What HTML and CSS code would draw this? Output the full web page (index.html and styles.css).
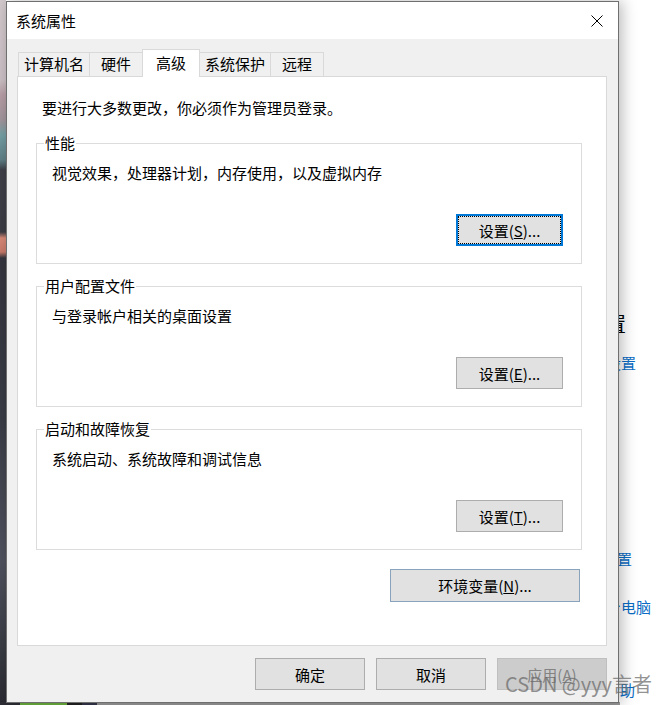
FILE: index.html
```html
<!DOCTYPE html>
<html lang="zh-CN">
<head>
    <meta charset="UTF-8">
    <title>系统属性</title>
    <link rel="stylesheet" href="styles.css">
</head>
<body>
    <div class="desktop">
        <div class="screen">
            <div class="wallpaper"></div>
            <!-- Einstellungen-Fenster im Hintergrund -->
            <div class="settings-window">
                <div class="related">
                    <div class="related-title">相关设置</div>
                    <a class="related-link first">远程桌面设置</a>
                    <a class="related-link second">高级系统设置</a>
                    <a class="related-link third">重命名这台电脑</a>
                    <a class="related-link help">获取帮助</a>
                </div>
            </div>
        </div>
        <div class="taskbar"></div>

        <!-- Dialog -->
        <div class="dialog">
            <div class="titlebar">
                <span class="title">系统属性</span>
                <span class="close">
                    <svg width="12" height="12" viewBox="0 0 12 12">
                        <path d="M0.5 0.5 L11.5 11.5 M11.5 0.5 L0.5 11.5" stroke="#000" stroke-width="1" fill="none"/>
                    </svg>
                </span>
            </div>
            <div class="dialog-body">
                <div class="tabs">
                    <div class="tab">计算机名</div>
                    <div class="tab">硬件</div>
                    <div class="tab active">高级</div>
                    <div class="tab">系统保护</div>
                    <div class="tab">远程</div>
                </div>
                <div class="panel">
                    <p class="notice">要进行大多数更改，你必须作为管理员登录。</p>

                    <div class="group">
                        <div class="group-title">性能</div>
                        <p class="group-text">视觉效果，处理器计划，内存使用，以及虚拟内存</p>
                        <div class="group-actions">
                            <button class="btn focused">设置(<u>S</u>)...</button>
                        </div>
                    </div>

                    <div class="group">
                        <div class="group-title">用户配置文件</div>
                        <p class="group-text">与登录帐户相关的桌面设置</p>
                        <div class="group-actions">
                            <button class="btn">设置(<u>E</u>)...</button>
                        </div>
                    </div>

                    <div class="group">
                        <div class="group-title">启动和故障恢复</div>
                        <p class="group-text">系统启动、系统故障和调试信息</p>
                        <div class="group-actions">
                            <button class="btn">设置(<u>T</u>)...</button>
                        </div>
                    </div>

                    <div class="env-row">
                        <button class="btn env">环境变量(<u>N</u>)...</button>
                    </div>
                </div>
                <div class="dialog-buttons">
                    <button class="btn wide">确定</button>
                    <button class="btn wide">取消</button>
                    <button class="btn wide" disabled>应用(<u>A</u>)</button>
                </div>
            </div>
        </div>

        <div class="watermark">CSDN @yyy言者</div>
    </div>
</body>
</html>
```

FILE: styles.css
```css
body {
    margin: 0;
    font-family: "Noto Sans CJK SC", "Microsoft YaHei", sans-serif;
    font-size: 15px;
    color: #000;
    background-color: #fff;
}
.desktop {
    position: relative;
    width: 663px;
    height: 705px;
    overflow: hidden;
}
.screen {
    display: flex;
    height: 702px;
}
.wallpaper {
    width: 6px;
    flex-shrink: 0;
    background: linear-gradient(to bottom,
        #d3cace 0, #cbc0c5 80px, #b89ea6 95px, #a2959c 120px,
        #74a0a5 135px, #5f7f86 160px, #3e3f48 170px, #3b3c45 232px,
        #d98a78 238px, #c87a6a 252px, #34353e 258px, #3a3c46 420px,
        #50535e 560px, #3c3e47 640px, #2b2c33 702px);
}
.settings-window {
    flex: 1;
    background-color: #fff;
    padding-left: 540px;
}
.related {
    display: flex;
    flex-direction: column;
    align-items: flex-start;
    white-space: nowrap;
}
.related-title {
    margin-top: 310px;
    font-size: 20px;
    line-height: 28px;
}
.related-link {
    color: #0a6cc4;
    line-height: 22px;
}
.related-link.first { margin-top: 14px; }
.related-link.second { margin-top: 174px; margin-left: -4px; }
.related-link.third { margin-top: 26px; }
.related-link.help { margin-top: 61px; padding-left: 29px; }
.taskbar {
    height: 3px;
    background: linear-gradient(to right,
        #2e2f36 0, #2e2f36 20px, #6cb33f 20px, #6cb33f 67px,
        #222 67px, #222 82px, #34354a 82px, #34354a 97px, #9a9a9a 97px, #9a9a9a 620px, #fff 620px);
}

/* Dialog */
.dialog {
    position: absolute;
    left: 6px;
    top: 1px;
    width: 613px;
    height: 702px;
    box-sizing: border-box;
    border: 1px solid #6f6f6f;
    background-color: #f0f0f0;
    box-shadow: 3px 0 14px rgba(0, 0, 0, 0.28);
    display: flex;
    flex-direction: column;
}
.titlebar {
    height: 37px;
    background-color: #fff;
    display: flex;
    justify-content: space-between;
    align-items: center;
}
.title {
    padding-left: 9px;
    line-height: 37px;
}
.close {
    width: 42px;
    height: 37px;
    display: flex;
    align-items: center;
    justify-content: center;
}
.dialog-body {
    flex: 1;
    padding: 10px 11px 12px 10px;
}
.tabs {
    display: flex;
    align-items: flex-end;
    height: 27px;
    padding-left: 1px;
}
.tab {
    height: 24px;
    box-sizing: border-box;
    min-width: 54px;
    padding: 0 5px;
    margin-left: -1px;
    border: 1px solid #d9d9d9;
    border-bottom: none;
    background-color: #f0f0f0;
    line-height: 22px;
    text-align: center;
}
.tab:first-child {
    margin-left: 0;
}
.tab.active {
    position: relative;
    height: 28px;
    margin-bottom: -1px;
    padding: 0 13px;
    background-color: #fff;
    line-height: 25px;
}
.panel {
    height: 570px;
    box-sizing: border-box;
    border: 1px solid #d9d9d9;
    background-color: #fff;
    padding: 21px 24px 0 18px;
}
.notice {
    margin: 0 0 25px 6px;
    line-height: 20px;
}
.group {
    border: 1px solid #dcdcdc;
    padding: 0 18px 17px 15px;
    margin-bottom: 22px;
}
.group-title {
    display: table;
    margin: -11px 0 0 -8px;
    padding: 0 1px;
    background-color: #fff;
    line-height: 20px;
}
.group-text {
    margin: 10px 0 0 0;
    line-height: 20px;
}
.group-actions {
    display: flex;
    justify-content: flex-end;
    margin-top: 31px;
}
.btn {
    display: inline-flex;
    align-items: center;
    justify-content: center;
    width: 107px;
    height: 32px;
    box-sizing: border-box;
    padding: 0;
    border: 1px solid #adadad;
    background-color: #e1e1e1;
    font-family: inherit;
    font-size: 15px;
    color: #000;
}
.btn.focused {
    border: 2px solid #0078d7;
    outline: 1px dotted #000;
    outline-offset: -3px;
}
.btn:disabled {
    background-color: #cccccc;
    border-color: #bfbfbf;
    color: #838383;
}
.env-row {
    display: flex;
    justify-content: flex-end;
    margin-top: -3px;
    padding-right: 2px;
}
.btn.env {
    width: 190px;
    height: 33px;
    border-color: #8aa3bd;
}
.dialog-buttons {
    display: flex;
    justify-content: flex-end;
    gap: 11px;
    margin-top: 12px;
}
.btn.wide {
    width: 110px;
}
.watermark {
    position: absolute;
    left: 505px;
    top: 670px;
    font-size: 20px;
    line-height: 28px;
    color: rgba(105, 105, 105, 0.72);
    white-space: nowrap;
}
```
